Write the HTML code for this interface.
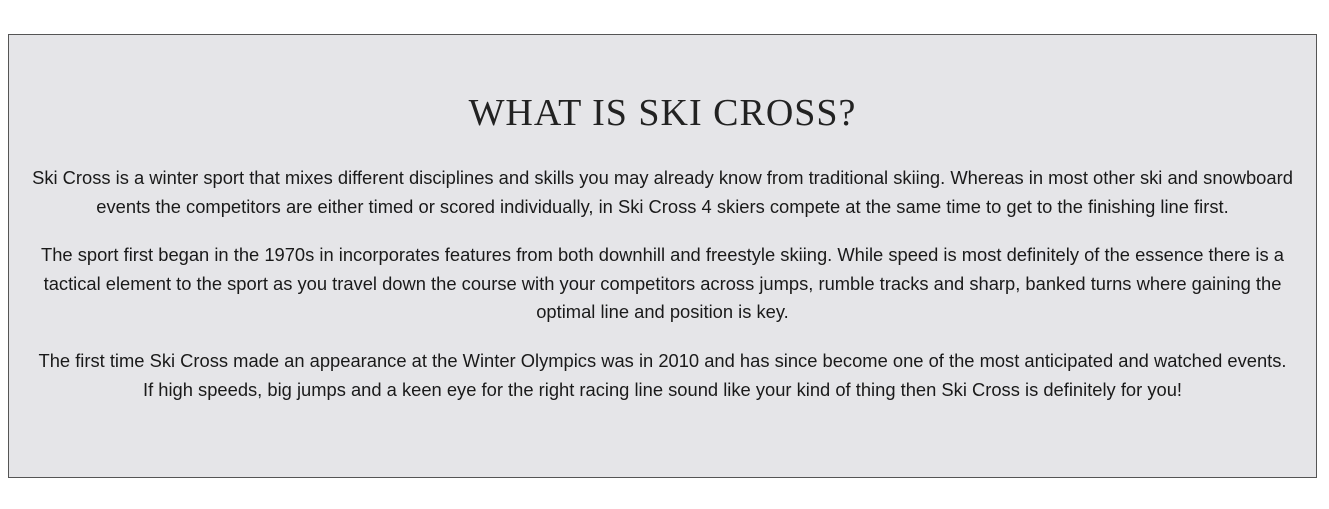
<!DOCTYPE html>
<html>
<head>
<meta charset="utf-8">
<style>
html,body{margin:0;padding:0;background:#fff;width:1329px;height:509px;overflow:hidden;}
.box{position:absolute;left:8px;top:34px;width:1307px;height:442px;background:#e5e5e8;border:1px solid #555;}
h1{position:absolute;left:0;right:0;top:58px;margin:0;text-align:center;font-family:"Liberation Serif",serif;font-weight:normal;font-size:38px;letter-spacing:1px;color:#222;line-height:40px;}
p{position:absolute;left:0;right:0;margin:0;text-align:center;font-family:"Liberation Sans",sans-serif;font-size:18.35px;line-height:28.5px;color:#1a1a1a;white-space:nowrap;}
</style>
</head>
<body>
<div class="box">
<h1>WHAT IS SKI CROSS?</h1>
<p style="top:129px">Ski Cross is a winter sport that mixes different disciplines and skills you may already know from traditional skiing. Whereas in most other ski and snowboard<br>events the competitors are either timed or scored individually, in Ski Cross 4 skiers compete at the same time to get to the finishing line first.</p>
<p style="top:206px">The sport first began in the 1970s in incorporates features from both downhill and freestyle skiing. While speed is most definitely of the essence there is a<br>tactical element to the sport as you travel down the course with your competitors across jumps, rumble tracks and sharp, banked turns where gaining the<br>optimal line and position is key.</p>
<p style="top:312px">The first time Ski Cross made an appearance at the Winter Olympics was in 2010 and has since become one of the most anticipated and watched events.<br>If high speeds, big jumps and a keen eye for the right racing line sound like your kind of thing then Ski Cross is definitely for you!</p>
</div>
</body>
</html>
